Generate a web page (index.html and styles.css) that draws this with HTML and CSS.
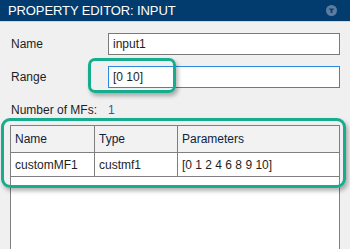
FILE: index.html
```html
<!DOCTYPE html>
<html>
<head>
    <title>Property Editor: Input</title>
    <link rel="stylesheet" href="styles.css">
</head>
<body>
    <div class="panel">
        <div class="header">
            <span class="title">PROPERTY EDITOR: INPUT</span>
            <svg class="collapse" width="11" height="11" viewBox="0 0 10 10">
                <circle cx="5" cy="5" r="5" fill="#5a7da1"/>
                <polygon points="2.4,3.2 7.6,3.2 5.8,5.3 5.8,7.2 4.2,7.2 4.2,5.3" fill="#183f6b"/>
            </svg>
        </div>
        <div class="content">
            <div class="form">
                <label class="label">Name</label>
                <div class="field"><input type="text" value="input1"></div>
                <label class="label">Range</label>
                <div class="field"><input type="text" class="active" value="[0 10]"></div>
                <span class="label">Number of MFs:</span>
                <span class="count">1</span>
            </div>
            <div class="grid">
                <div class="row head">
                    <div class="cell">Name</div>
                    <div class="cell">Type</div>
                    <div class="cell">Parameters</div>
                </div>
                <div class="row">
                    <div class="cell">customMF1</div>
                    <div class="cell">custmf1</div>
                    <div class="cell">[0 1 2 4 6 8 9 10]</div>
                </div>
            </div>
            <div class="mark mark-range"></div>
            <div class="mark mark-table"></div>
        </div>
    </div>
</body>
</html>
```

FILE: styles.css
```css
body {
    margin: 0;
    font-family: "Liberation Sans", Arial, sans-serif;
    font-size: 12px;
    background-color: #f0f0f0;
    color: #1e1e1e;
    overflow: hidden;
}
.panel {
    height: 249px;
    overflow: hidden;
}
.header {
    height: 21px;
    background-color: #023c6e;
    border-bottom: 1px solid #cfd5db;
    display: flex;
    align-items: center;
    justify-content: space-between;
    padding: 0 13px 0 8px;
}
.title {
    color: #ffffff;
    font-size: 13px;
    letter-spacing: -0.1px;
}
.collapse {
    display: block;
}
.content {
    position: relative;
    padding-top: 11px;
}
.form {
    display: grid;
    grid-template-columns: 97px 232px;
    grid-auto-rows: 22px;
    row-gap: 11px;
    padding-left: 11px;
    align-items: center;
}
.label {
    line-height: 14px;
}
.field input {
    box-sizing: border-box;
    width: 232px;
    height: 22px;
    margin: 0;
    padding: 0 4px;
    border: 1px solid #7a7a7a;
    background: #ffffff;
    font-family: inherit;
    font-size: 12px;
    color: #1e1e1e;
    outline: none;
}
.field input.active {
    border-color: #2a8ae2;
}
.count {
    color: #1d5f9e;
    line-height: 14px;
}
.grid {
    box-sizing: border-box;
    margin: 4px 0 0 10px;
    width: 330px;
    height: 124px;
    border: 1px solid #7f7f7f;
    border-bottom: none;
    background: #ffffff;
}
.row {
    display: grid;
    grid-template-columns: 84px 83px 1fr;
    height: 23px;
    border-bottom: 1px solid #7f7f7f;
}
.row.head {
    height: 26px;
    background: #f2f2f2;
    color: #0f2240;
}
.cell {
    display: flex;
    align-items: center;
    padding-left: 4px;
    border-right: 1px solid #7f7f7f;
}
.cell:last-child {
    border-right: none;
}
.mark {
    position: absolute;
    box-sizing: border-box;
    border: 3px solid #15ad8d;
    border-radius: 7px;
    box-shadow: 2px 3px 4px rgba(0, 0, 0, 0.3);
}
.mark-range {
    left: 88px;
    top: 36px;
    width: 88px;
    height: 35px;
}
.mark-table {
    left: 1px;
    top: 96px;
    width: 345px;
    height: 70px;
    border-radius: 9px;
}
```
